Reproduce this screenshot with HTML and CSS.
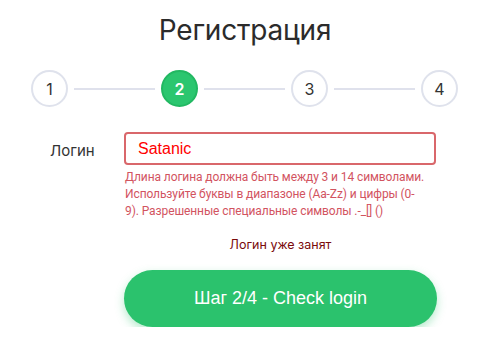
FILE: index.html
```html
<!DOCTYPE html>
<html lang="ru">
<head>
	<meta charset="UTF-8">
	<title>Регистрация</title>
	<link rel="stylesheet" href="styles.css">
</head>
<body>
	<div class="reg">
		<h1 class="reg-title">Регистрация</h1>
		<div class="steps">
			<div class="step">1</div>
			<div class="step-line"></div>
			<div class="step active">2</div>
			<div class="step-line"></div>
			<div class="step">3</div>
			<div class="step-line"></div>
			<div class="step">4</div>
		</div>
		<div class="form-row">
			<label class="form-label" for="login">Логин</label>
			<div class="form-field">
				<input id="login" class="form-input error" type="text" value="Satanic">
				<p class="form-hint">Длина логина должна быть между 3 и 14 символами. Используйте буквы в диапазоне (Aa-Zz) и цифры (0-9). Разрешенные специальные символы .-_[] ()</p>
				<p class="form-status">Логин уже занят</p>
				<button class="next-btn">Шаг 2/4 - Check login</button>
			</div>
		</div>
	</div>
</body>
</html>
```

FILE: styles.css
```css
body, p, h1 {
	margin: 0;
	padding: 0;
}
body {
	background: #fff;
	font-family: "Inter", "Noto Sans", sans-serif;
	color: #2f2f2f;
}
.reg {
	width: 483px;
}
.reg-title {
	padding-top: 13px;
	padding-left: 7px;
	text-align: center;
	font-size: 28px;
	font-weight: 400;
	line-height: 34px;
	letter-spacing: -0.2px;
	color: #2b2b2b;
}
.steps {
	display: flex;
	align-items: center;
	margin-top: 23px;
	padding: 0 25px 0 31px;
}
.step {
	box-sizing: border-box;
	width: 37px;
	height: 37px;
	border-radius: 50%;
	border: 2px solid #dfe2ec;
	display: flex;
	align-items: center;
	justify-content: center;
	font-size: 16px;
	color: #333;
}
.step.active {
	background: #2bc66f;
	border-color: #22b862;
	color: #fff;
	font-weight: 600;
}
.step-line {
	flex: 1;
	height: 2px;
	margin: 0 6px;
	background: #dfe1ec;
}
.form-row {
	display: flex;
	margin-top: 25px;
}
.form-label {
	width: 74px;
	padding-left: 50px;
	padding-top: 9px;
	font-size: 15px;
	color: #333;
}
.form-field {
	width: 313px;
}
.form-input {
	box-sizing: border-box;
	width: 312px;
	height: 33px;
	padding: 0 12px;
	border: 2px solid #d9676b;
	border-radius: 4px;
	font-family: "Liberation Sans", Arial, sans-serif;
	font-size: 16px;
	color: #f00;
	outline: none;
}
.form-hint {
	margin-top: 4px;
	padding-left: 1px;
	width: 303px;
	font-family: "Roboto", "Noto Sans", sans-serif;
	font-size: 12px;
	letter-spacing: -0.1px;
	line-height: 17px;
	color: #d2545f;
}
.form-status {
	margin-top: 17px;
	text-align: center;
	font-size: 12.5px;
	color: #7a0a0a;
}
.next-btn {
	display: block;
	width: 313px;
	height: 57px;
	margin-top: 18px;
	border: none;
	border-radius: 29px;
	background: #2bc26d;
	box-shadow: 0 4px 10px rgba(43, 194, 109, 0.35);
	color: #fff;
	font-family: "Liberation Sans", Arial, sans-serif;
	font-size: 18px;
	cursor: pointer;
}
```
